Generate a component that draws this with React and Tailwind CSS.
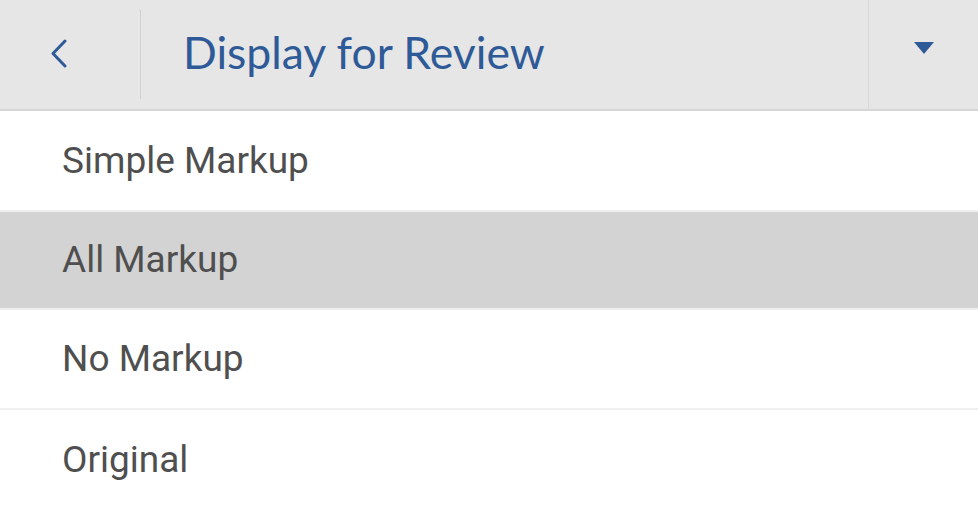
import { useState } from 'react';

const options = [
  { label: 'Simple Markup', h: 'h-[101px]' },
  { label: 'All Markup', h: 'h-[98px]' },
  { label: 'No Markup', h: 'h-[100px]' },
  { label: 'Original', h: 'h-[100px]' },
];

function App() {
  const [selected, setSelected] = useState('All Markup');

  return (
    <div className="w-[978px] h-[519px] overflow-hidden bg-white" style={{ fontFamily: 'Roboto, "Noto Sans", sans-serif' }}>
      <header className="h-[111px] bg-[#e6e6e6] border-b-2 border-[#d6d6d6] flex items-stretch">
        <button className="w-[140px] flex items-center pl-[50px] pb-[2px]">
          <svg width="18" height="29" viewBox="0 0 18 29" fill="none">
            <path d="M15 2 L3 14.5 L15 27" stroke="#2f5a98" strokeWidth="3" strokeLinecap="round" strokeLinejoin="round" />
          </svg>
        </button>
        <div className="w-px bg-[#d0d0d0] my-[10px]" />
        <h1 className="flex-1 flex items-center pl-[42px] pb-[4px] text-[44.5px] text-[#2f5a98]" style={{ fontFamily: 'Lato, Roboto, sans-serif' }}>
          Display for Review
        </h1>
        <div className="w-px bg-[#d9d9d9]" />
        <button className="w-[109px] flex items-center justify-center pb-[12px]">
          <svg width="20" height="13" viewBox="0 0 20 13">
            <path d="M0 0 H20 L10 12 Z" fill="#2f5a98" />
          </svg>
        </button>
      </header>

      <ul>
        {options.map((opt, i) => (
          <li
            key={opt.label}
            onClick={() => setSelected(opt.label)}
            className={
              opt.h + ' flex items-center pl-[62px] text-[37px] text-[#4f4f4f] ' +
              (selected === opt.label ? 'bg-[#d3d3d3] ' : '') +
              (i < options.length - 1 ? 'border-b-2 border-[#efefef]' : '')
            }
          >
            {opt.label}
          </li>
        ))}
      </ul>
    </div>
  );
}

export default App;
